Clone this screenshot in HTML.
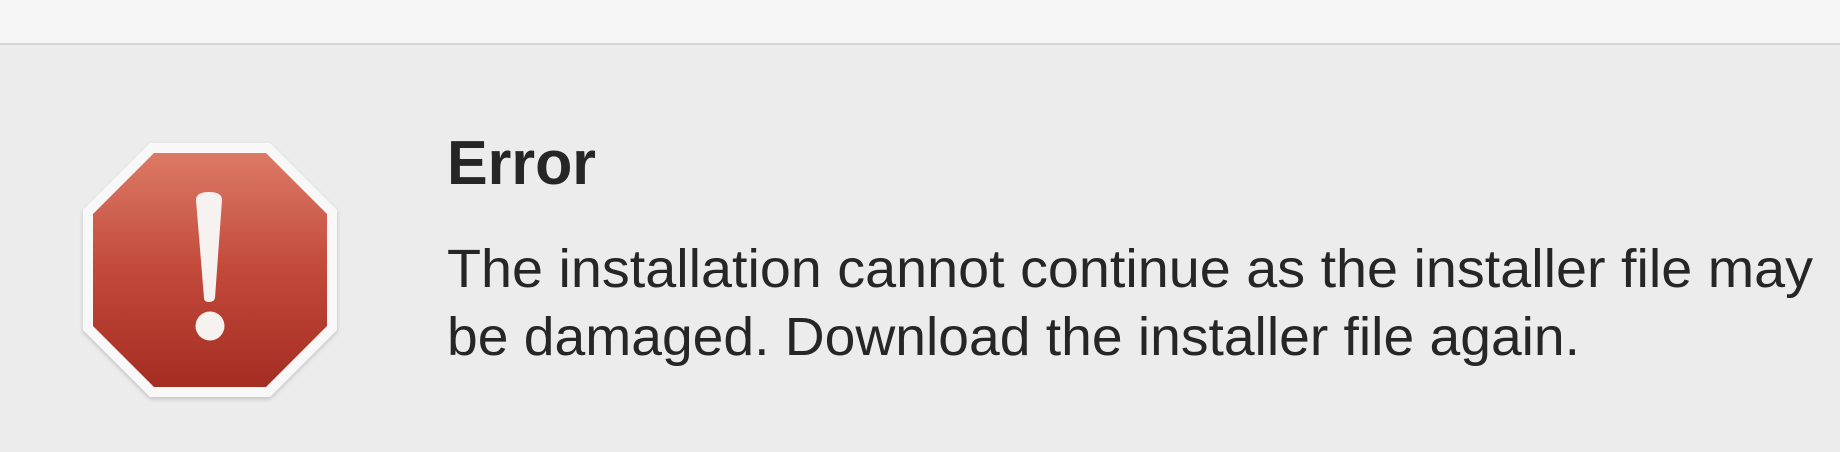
<!DOCTYPE html>
<html><head><meta charset="utf-8"><style>
html,body{margin:0;padding:0;width:1840px;height:452px;overflow:hidden;background:#ececec;}
.top{position:absolute;left:0;top:0;width:1840px;height:43px;background:#f6f6f6;border-bottom:2px solid #d6d6d6;}
svg{position:absolute;left:0;top:0;}
</style></head><body>
<div class="top"></div>
<svg width="1840" height="452" viewBox="0 0 1840 452">
<defs>
<linearGradient id="g" x1="0" y1="0" x2="0" y2="1">
<stop offset="0" stop-color="#dc7a66"/>
<stop offset="0.5" stop-color="#c2493a"/>
<stop offset="1" stop-color="#a42d22"/>
</linearGradient>
<filter id="s" x="-10%" y="-10%" width="120%" height="120%"><feDropShadow dx="0" dy="2" stdDeviation="2" flood-color="#000" flood-opacity="0.18"/></filter>
</defs>
<polygon filter="url(#s)" fill="#f8f8f8" points="150,143 270,143 337,210 337,330 270,397 150,397 83,330 83,210"/>
<polygon fill="url(#g)" points="154,153 266,153 327,214 327,326 266,387 154,387 93,326 93,214"/>
<path fill="#f6f2f0" d="M196,200 Q196,192 209,192 Q222,192 222,200 L215,298 Q214,302 209,302 Q204,302 204,298 Z"/>
<circle cx="210" cy="326" r="14.5" fill="#f6f2f0"/>
<g font-family="'Liberation Sans', sans-serif" fill="#262626">
<text x="447" y="184" font-size="62" font-weight="bold" textLength="149" lengthAdjust="spacingAndGlyphs">Error</text>
<text x="447" y="287" font-size="54" textLength="1366" lengthAdjust="spacingAndGlyphs">The installation cannot continue as the installer file may</text>
<text x="447" y="355" font-size="54" textLength="1133" lengthAdjust="spacingAndGlyphs">be damaged. Download the installer file again.</text>
</g>
</svg>
</body></html>
